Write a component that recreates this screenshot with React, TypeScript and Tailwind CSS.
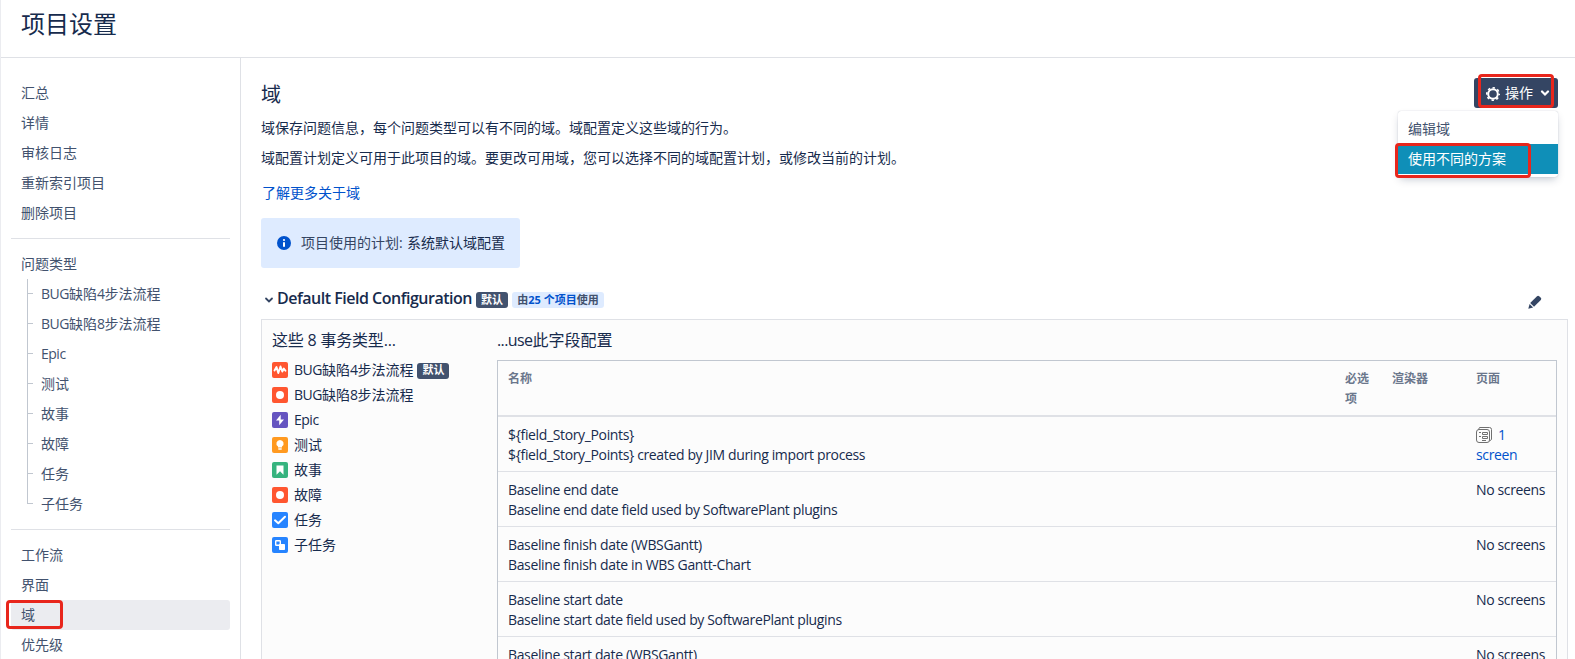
import React from "react";

function NavItem({ label, active }: { label: string; active?: boolean }) {
  return (
    <a className={"relative flex h-[30px] items-center rounded-[3px] pb-[2px] pl-[10px] " + (active ? "bg-[#ebecf0]" : "")}>
      {label}
      {active && <span className="absolute -left-[5px] top-0 h-[29px] w-[57px] rounded-[4px] border-[3px] border-[#e8261c]" />}
    </a>
  );
}

const issueTypes = ["BUG缺陷4步法流程", "BUG缺陷8步法流程", "Epic", "测试", "故事", "故障", "任务", "子任务"];

function Latin({ children, className = "" }: { children: React.ReactNode; className?: string }) {
  return <span className={"text-[14px] tracking-[-0.36px] " + className}>{children}</span>;
}

function TypeLabel({ label }: { label: string }) {
  const parts = label.split(/([A-Za-z0-9]+)/).filter(Boolean);
  return (
    <span>
      {parts.map((p, i) => (/[A-Za-z0-9]/.test(p) ? <span key={i} className="tracking-[-0.5px]">{p}</span> : <React.Fragment key={i}>{p}</React.Fragment>))}
    </span>
  );
}

function Sidebar() {
  return (
    <nav className="w-[240px] shrink-0 border-r border-[#dfe1e6] pl-[10px] pr-[10px] pt-[20px] text-[#42526e]">
      {["汇总", "详情", "审核日志", "重新索引项目", "删除项目"].map((l) => (
        <NavItem key={l} label={l} />
      ))}
      <div className="my-[10px] h-px bg-[#dfe1e6]" />
      <NavItem label="问题类型" />
      <ul className="pl-[16px]">
        {issueTypes.map((l, i) => (
          <li key={l} className="flex h-[30px]">
            <span className="flex w-[6px] shrink-0 flex-col">
              <span className="h-[15px] border-b border-l border-[#c1c7d0]" />
              <span className={i < issueTypes.length - 1 ? "h-[15px] border-l border-[#c1c7d0]" : "h-[15px]"} />
            </span>
            <a className="flex items-center pb-[2px] pl-[8px]">
              <TypeLabel label={l} />
            </a>
          </li>
        ))}
      </ul>
      <div className="my-[10px] h-px bg-[#dfe1e6]" />
      <NavItem label="工作流" />
      <NavItem label="界面" />
      <NavItem label="域" active />
      <NavItem label="优先级" />
    </nav>
  );
}

const typeColors = ["#ff5630", "#ff5630", "#6554c0", "#ff991f", "#36b37e", "#ff5630", "#2684ff", "#2684ff"];
const glyphs = [
  <path d="M2.500 8.500 4.500 5 6.300 11 8.500 4.500 10.300 9.500 11.800 6.500 13.500 8.800" fill="none" stroke="#fff" strokeWidth="1.900" strokeLinejoin="round" strokeLinecap="round" />,
  <circle cx="8" cy="8" r="4" fill="#fff" />,
  <path d="M8.700 2.800 4 8.600h3.200L7.200 13.200 12 7.400H8.700z" fill="#fff" />,
  <path d="M8 3a3.600 3.600 0 0 0-2 6.600V10.500h4V9.600A3.600 3.600 0 0 0 8 3zM6.300 11.300h3.400v1.400H6.300z" fill="#fff" />,
  <path d="M4.500 3.500h7v9.300L8 9.300l-3.500 3.500z" fill="#fff" />,
  <circle cx="8" cy="8" r="4" fill="#fff" />,
  <path d="M3 8.300 6.300 11.300 13 4.800" fill="none" stroke="#fff" strokeWidth="2" strokeLinecap="round" strokeLinejoin="round" />,
  <>
    <rect x="3.700" y="3.700" width="4.600" height="4.600" rx=".6" fill="none" stroke="#fff" strokeWidth="1.400" />
    <rect x="7" y="7" width="6" height="6" rx=".8" fill="#fff" />
  </>,
];

function TypeIcon({ index }: { index: number }) {
  return (
    <svg width="16" height="16" viewBox="0 0 16 16" className="shrink-0">
      <rect width="16" height="16" rx="2" fill={typeColors[index]} />
      {glyphs[index]}
    </svg>
  );
}

function Lozenge() {
  return <span className="flex h-[16px] w-[32px] items-center justify-center rounded-[3px] bg-[#42526e] text-[11px] font-bold text-white">默认</span>;
}

const rows = [
  ["${field_Story_Points}", "${field_Story_Points} created by JIM during import process"],
  ["Baseline end date", "Baseline end date field used by SoftwarePlant plugins"],
  ["Baseline finish date (WBSGantt)", "Baseline finish date in WBS Gantt-Chart"],
  ["Baseline start date", "Baseline start date field used by SoftwarePlant plugins"],
  ["Baseline start date (WBSGantt)", ""],
];

function ScreenIcon() {
  return (
    <svg width="16" height="16" viewBox="0 0 16 16" fill="none" stroke="#707070" strokeWidth="1">
      <path d="M2.500 2.500 3.500.5H13.500a2 2 0 0 1 2 2V12.500L13.500 14" />
      <rect x=".5" y="2.500" width="13" height="13" rx="2.500" />
      <path d="M3 5.500h2M3 9.500h2M6 13.500h4" />
      <path d="M6.500 5.500h5v2h-5zM6.500 9.500h5v2h-5z" />
    </svg>
  );
}

const grid = "grid grid-cols-[837px_47px_84px_90px]";

function FieldTable() {
  return (
    <div className="w-[1060px] border-x border-t border-[#c1c7d0]">
      <div className={grid + " h-[54px] pt-[8px] text-[12px] font-bold leading-[20px] text-[#6b778c]"}>
        <div className="pl-[10px]">名称</div>
        <div className="pl-[10px]"><span className="block w-[26px]">必选项</span></div>
        <div className="pl-[10px]">渲染器</div>
        <div className="pl-[10px]">页面</div>
      </div>
      <div className="h-[2px] bg-[#dfe1e6]" />
      {rows.map(([name, desc], i) => (
        <div key={name} className={grid + " h-[55px] border-b border-[#dfe1e6] pt-[8px] leading-[20px]"}>
          <div className="pl-[10px]">
            <div><Latin>{name}</Latin></div>
            <div><Latin>{desc}</Latin></div>
          </div>
          <div />
          <div />
          <div className="whitespace-nowrap pl-[10px]">
            {i === 0 ? (
              <div className="text-[#0052cc]">
                <div className="flex items-center gap-[6px]">
                  <ScreenIcon />
                  <Latin>1</Latin>
                </div>
                <Latin>screen</Latin>
              </div>
            ) : (
              <Latin>No screens</Latin>
            )}
          </div>
        </div>
      ))}
    </div>
  );
}

function ActionMenu() {
  return (
    <div className="relative h-[30px] w-[84px]">
      <button className="flex h-[30px] w-[84px] items-center rounded-[3px] bg-[#344563] pl-[12px] text-[14px] text-white">
        <svg width="14" height="14" viewBox="0 0 14 14" className="mr-[5px] mt-[2px]">
          <circle cx="7" cy="7" r="4.800" fill="none" stroke="#fff" strokeWidth="2" />
          <circle cx="7" cy="7" r="6.200" fill="none" stroke="#fff" strokeWidth="1.600" strokeDasharray="2.435 2.435" strokeDashoffset="1.200" />
        </svg>
        <span className="pb-[2px]">操作</span>
        <svg width="10" height="7" viewBox="0 0 10 7" className="ml-[7px]">
          <path d="M2 1.500 5 4.500 8 1.500" fill="none" stroke="#fff" strokeWidth="2.200" strokeLinecap="round" />
        </svg>
      </button>
      <span className="absolute -top-[4px] left-[4px] h-[34px] w-[76px] rounded-[4px] border-[3px] border-[#e8261c]" />
      <div className="absolute right-0 top-[33px] h-[66px] w-[160px] rounded-[3px] bg-white pt-[3px] text-[#42526e] shadow-[0_4px_8px_-2px_rgba(9,30,66,0.25),0_0_1px_rgba(9,30,66,0.31)]">
        <div className="flex h-[30px] items-center pb-[2px] pl-[10px]">编辑域</div>
        <div className="relative flex h-[30px] items-center bg-[#0f8fb8] pb-[2px] pl-[10px] text-white">
          使用不同的方案
          <span className="absolute -left-[3px] -top-px h-[35px] w-[136px] rounded-[4px] border-[3px] border-[#e8261c]" />
        </div>
      </div>
    </div>
  );
}

function Main() {
  return (
    <main className="min-w-0 flex-1 pl-[20px] pr-[7px] pt-[20px]">
      <div className="flex h-[40px] justify-between pr-[10px]">
        <h2 className="h-[30px] text-[20px] leading-[34px]">域</h2>
        <ActionMenu />
      </div>
      <p className="h-[30px] leading-[20px]">域保存问题信息，每个问题类型可以有不同的域。域配置定义这些域的行为。</p>
      <p className="h-[35px] leading-[20px]">域配置计划定义可用于此项目的域。要更改可用域，您可以选择不同的域配置计划，或修改当前的计划。</p>
      <p className="h-[35px] pl-px leading-[20px] text-[#0052cc]">了解更多关于域</p>
      <div className="flex h-[50px] w-[259px] items-center rounded-[3px] bg-[#deebff] pl-[16px]">
        <svg width="14" height="14" viewBox="0 0 14 14" className="mr-[10px]">
          <circle cx="7" cy="7" r="7" fill="#0052cc" />
          <rect x="6" y="6" width="2" height="5" rx="1" fill="#fff" />
          <circle cx="7" cy="4" r="1.100" fill="#fff" />
        </svg>
        <span className="w-[106px] pb-[2px] text-[#344563]">项目使用的计划:</span>
        <span className="pb-[2px] text-[#172b4d]">系统默认域配置</span>
      </div>
      <div className="mt-[21px] flex h-[30px] items-start">
        <div className="flex h-[20px] items-center">
          <svg width="10" height="7" viewBox="0 0 10 7" className="ml-[3px] mr-[3px] mt-[3px]">
            <path d="M2 1.500 5 4.500 8 1.500" fill="none" stroke="#344563" strokeWidth="1.800" strokeLinecap="round" />
          </svg>
          <h3 className="w-[199px] whitespace-nowrap pb-[2px] text-[16px] font-semibold tracking-[-0.49px]">Default Field Configuration</h3>
          <div className="flex pt-[2px]">
            <Lozenge />
            <span className="ml-[4px] flex h-[16px] w-[92px] items-center justify-center whitespace-nowrap rounded-[3px] bg-[#deebff] text-[11px] font-bold text-[#42526e]">
              由<span className="text-[#0052cc]">25 个项目</span>使用
            </span>
          </div>
        </div>
        <svg width="14" height="14" viewBox="0 0 14 14" className="ml-auto mr-[26px] mt-[6px]" fill="#344563">
          <path d="M2.200 8 9 1.200a1.600 1.600 0 0 1 2.200 0L12.800 2.800a1.600 1.600 0 0 1 0 2.200L6 11.800z" />
          <path d="M1.600 8.900 5.100 12.400.3 13.700z" />
        </svg>
      </div>
      <section className="flex h-[400px] border border-[#dfe1e6] bg-[#fcfcfc] pl-[10px]">
        <div className="w-[225px] shrink-0 pt-[9px]">
          <h4 className="h-[28px] text-[16px] leading-[22px] tracking-[-0.2px]">这些 8 事务类型...</h4>
          {issueTypes.map((l, i) => (
            <div key={l} className="flex h-[25px] items-center">
              <TypeIcon index={i} />
              <span className="ml-[6px] mr-[4px]"><TypeLabel label={l} /></span>
              {i === 0 && <span className="pt-[2px]"><Lozenge /></span>}
            </div>
          ))}
        </div>
        <div className="pt-[9px]">
          <h4 className="h-[31px] text-[16px] leading-[22px]"><span className="tracking-[-0.6px]">...use</span>此字段配置</h4>
          <FieldTable />
        </div>
      </section>
    </main>
  );
}

export default function App() {
  return (
    <div className="flex h-[659px] w-[1575px] flex-col overflow-hidden border-l border-[#ebecf0] bg-white font-['Open_Sans','Noto_Sans_CJK_SC',sans-serif] text-[14px] text-[#172b4d]">
      <header className="h-[58px] shrink-0 border-b border-[#dfe1e6] pl-[20px]">
        <h1 className="text-[24px] leading-[47px]">项目设置</h1>
      </header>
      <div className="flex flex-1">
        <Sidebar />
        <Main />
      </div>
    </div>
  );
}
